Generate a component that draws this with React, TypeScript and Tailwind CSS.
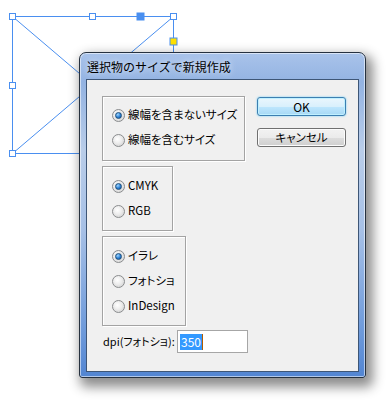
const font = "font-['Noto_Sans_CJK_JP',sans-serif]";
const palt = "[font-feature-settings:'palt']";

function Radio({ checked, label }: { checked?: boolean; label: string }) {
  return (
    <div className="flex items-center h-[16px] gap-[3px]">
      <span className="relative flex items-center justify-center w-[13px] h-[13px] rounded-full border border-[#8a8c8e] bg-[radial-gradient(circle_at_40%_35%,#ffffff,#dedede_70%,#c9c9c9)]">
        {checked ? (
          <span className="w-[7px] h-[7px] rounded-full border border-[#1f4f7a] bg-[radial-gradient(circle_at_35%_30%,#9fd6ff,#2a7fd4_55%,#0f4e93)]" />
        ) : (
          <span className="w-[7px] h-[7px] rounded-full bg-[radial-gradient(circle_at_35%_30%,#ffffff,#e2e2e2)]" />
        )}
      </span>
      <span className={`text-[11.5px] leading-none text-black whitespace-nowrap ${palt}`}>{label}</span>
    </div>
  );
}

function Group({ className, children }: { className: string; children: React.ReactNode }) {
  return (
    <div className={`flex flex-col gap-[9px] border border-[#a3a3a3] shadow-[inset_1px_1px_0_#fff,1px_1px_0_#fff] pl-[9px] ${className}`}>
      {children}
    </div>
  );
}

function Handle({ x, y, fill = "#ffffff", s = 6 }: { x: number; y: number; fill?: string; s?: number }) {
  return <rect x={x - s / 2 + 0.5} y={y - s / 2 + 0.5} width={s} height={s} fill={fill} stroke="#4a8ff0" strokeWidth="1" />;
}

export default function App() {
  return (
    <div className={`relative w-[391px] h-[402px] bg-white overflow-hidden ${font}`}>
      <svg className="absolute left-0 top-0" width="391" height="402">
        <g stroke="#4a8ff0" strokeWidth="1" fill="none">
          <rect x="12.5" y="16.5" width="161" height="137" />
          <line x1="12.5" y1="16.5" x2="173.5" y2="153.5" />
          <line x1="173.5" y1="16.5" x2="12.5" y2="153.5" />
        </g>
        <Handle x={12} y={16} />
        <Handle x={92} y={16} />
        <Handle x={173} y={16} />
        <Handle x={12} y={85} />
        <Handle x={12} y={153} />
        <Handle x={140} y={16} fill="#4a8ff0" s={7} />
        <Handle x={173} y={41} fill="#ffe000" s={7} />
      </svg>

      <div className="absolute left-[79px] top-[52px] w-[287px] h-[326px] flex flex-col rounded-t-[7px] rounded-b-[3px] border border-[#26313f] bg-[linear-gradient(180deg,#a9c3ea_0%,#93b3e2_9%,#b9cde9_30%,#a6c0e6_55%,#6f9bdb_85%,#5285d2_100%)] shadow-[4px_6px_12px_3px_rgba(0,0,0,0.45),inset_0_0_0_1px_rgba(255,255,255,0.55)]">
        <div className="h-[26px] flex items-center pl-[7px] pt-[1px]">
          <span className="text-[12px] leading-none text-black [text-shadow:0_0_6px_rgba(255,255,255,0.9)]">選択物のサイズで新規作成</span>
        </div>
        <div className="flex-1 mx-[6px] mb-[5px] border border-[#3e5676] bg-[#f0f0f0] flex pl-[15px] pt-[16px]">
          <div className="flex flex-col gap-[5px]">
            <Group className="w-[143px] h-[65px] pt-[10px]">
              <Radio checked label="線幅を含まないサイズ" />
              <Radio label="線幅を含むサイズ" />
            </Group>
            <Group className="w-[71px] h-[65px] pt-[11px]">
              <Radio checked label="CMYK" />
              <Radio label="RGB" />
            </Group>
            <Group className="w-[84px] h-[90px] pt-[11px]">
              <Radio checked label="イラレ" />
              <Radio label="フォトショ" />
              <Radio label="InDesign" />
            </Group>
            <div className="flex items-center mt-[-1px] pl-[1px]">
              <span className={`text-[11px] leading-none text-black w-[74px] whitespace-nowrap ${palt}`}>dpi(フォトショ):</span>
              <div className="w-[71px] h-[23px] border border-[#a6a6a6] bg-white flex items-center pl-[2px]">
                <span className="bg-[#3399ff] text-white text-[12px] leading-[16px] px-[1px]">350</span>
                <span className="w-[1px] h-[16px] bg-[#b35c00]" />
              </div>
            </div>
          </div>
          <div className="flex flex-col gap-[12px] ml-[9px] pt-[1px]">
            <button className="w-[89px] h-[19px] rounded-[3px] border border-[#3c7fb1] bg-[linear-gradient(180deg,#eaf6fd_0%,#d9f0fc_50%,#bee6fd_51%,#a7d9f5_100%)] shadow-[inset_0_0_0_1px_#c0f0ff,0_0_2px_#5fc9f5] text-[12px] leading-none text-black">
              OK
            </button>
            <button className={`w-[89px] h-[19px] rounded-[3px] border border-[#707070] bg-[linear-gradient(180deg,#f2f2f2_0%,#ebebeb_50%,#dddddd_51%,#cfcfcf_100%)] shadow-[inset_0_0_0_1px_#fcfcfc] text-[11.5px] leading-none text-black ${palt}`}>
              キャンセル
            </button>
          </div>
        </div>
      </div>
    </div>
  );
}
